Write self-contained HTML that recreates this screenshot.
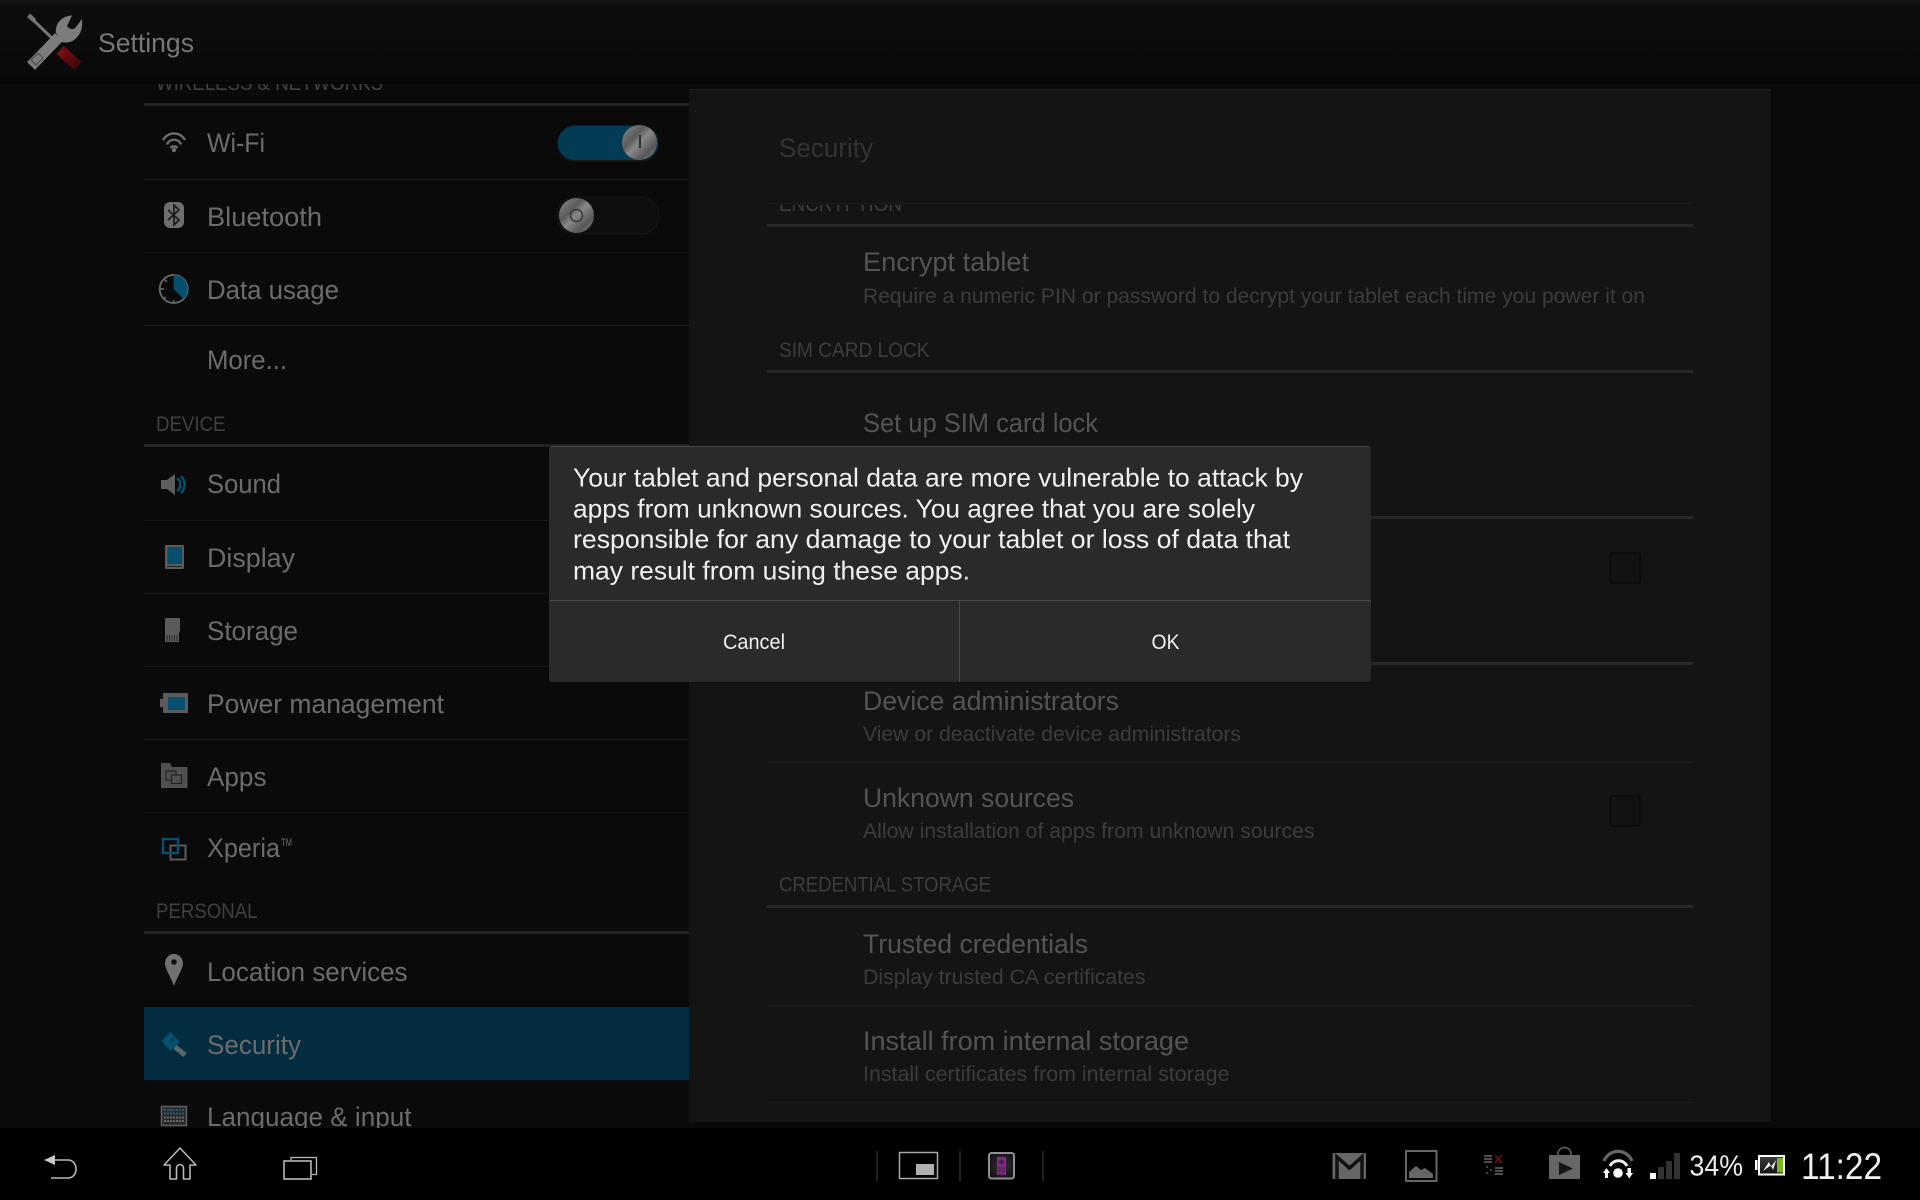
<!DOCTYPE html>
<html>
<head>
<meta charset="utf-8">
<style>
html,body{margin:0;padding:0;background:#000;width:1920px;height:1200px;overflow:hidden}
svg{display:block;position:absolute;left:0;top:0}
text{font-family:"Liberation Sans",sans-serif}
.i{font-size:27px;fill:#6c6c6c}
.h{font-size:21px;fill:#404040}
.t{font-size:27px;fill:#545454}
.s{font-size:21px;fill:#3c3c3c}
.sh{font-size:21px;fill:#3d3d3d}
.d{font-size:26px;fill:#f0f0f0}
.b{font-size:21px;fill:#f0f0f0}
</style>
</head>
<body>
<svg width="1920" height="1200" viewBox="0 0 1920 1200" xmlns="http://www.w3.org/2000/svg">
<defs>
<pattern id="tex" width="4" height="4" patternUnits="userSpaceOnUse">
<rect width="4" height="4" fill="#090909"/>
<path d="M0 0h1v1H0zM2 2h1v1H2z" fill="#0f0f0f"/>
</pattern>
<linearGradient id="bar" x1="0" y1="0" x2="0" y2="1">
<stop offset="0" stop-color="#161616"/><stop offset=".08" stop-color="#0d0d0d"/><stop offset="1" stop-color="#090909"/>
</linearGradient>
<linearGradient id="knob" x1="0" y1="0" x2="1" y2="1">
<stop offset="0" stop-color="#8a8a8a"/><stop offset=".35" stop-color="#5c5c5c"/><stop offset=".5" stop-color="#888"/><stop offset=".75" stop-color="#585858"/><stop offset="1" stop-color="#7a7a7a"/>
</linearGradient>
<linearGradient id="red" x1="0" y1="0" x2="1" y2="1">
<stop offset="0" stop-color="#7a0f14"/><stop offset="1" stop-color="#3e080a"/>
</linearGradient>
<linearGradient id="batt" x1="0" y1="0" x2="0" y2="1">
<stop offset="0" stop-color="#3c3c3c"/><stop offset="1" stop-color="#111"/>
</linearGradient>
<radialGradient id="rem" cx=".5" cy=".5" r=".6">
<stop offset="0" stop-color="#3a3040"/><stop offset="1" stop-color="#111"/>
</radialGradient>
<clipPath id="lc"><rect x="144" y="83" width="545" height="1045"/></clipPath>
<clipPath id="rc"><rect x="689" y="205" width="1082" height="917"/></clipPath>
</defs>

<!-- background -->
<rect width="1920" height="1200" fill="url(#tex)"/>

<!-- left list -->
<g clip-path="url(#lc)">
<text class="h" x="156" y="90" textLength="227" lengthAdjust="spacingAndGlyphs">WIRELESS &amp; NETWORKS</text>
<rect x="144" y="103" width="545" height="3" fill="#222"/>
<rect x="144" y="179" width="545" height="1" fill="#181818"/>
<rect x="144" y="252" width="545" height="1" fill="#181818"/>
<rect x="144" y="325" width="545" height="1" fill="#181818"/>
<text class="i" x="207" y="152" textLength="58" lengthAdjust="spacingAndGlyphs">Wi-Fi</text>
<text class="i" x="207" y="226" textLength="115" lengthAdjust="spacingAndGlyphs">Bluetooth</text>
<text class="i" x="207" y="299" textLength="132" lengthAdjust="spacingAndGlyphs">Data usage</text>
<text class="i" x="207" y="369" textLength="80" lengthAdjust="spacingAndGlyphs">More...</text>
<text class="h" x="156" y="431" textLength="69.500" lengthAdjust="spacingAndGlyphs">DEVICE</text>
<rect x="144" y="444" width="545" height="3" fill="#222"/>
<text class="i" x="207" y="493" textLength="74" lengthAdjust="spacingAndGlyphs">Sound</text>
<rect x="144" y="520" width="545" height="1" fill="#181818"/>
<text class="i" x="207" y="567" textLength="88" lengthAdjust="spacingAndGlyphs">Display</text>
<rect x="144" y="593" width="545" height="1" fill="#181818"/>
<text class="i" x="207" y="640" textLength="91" lengthAdjust="spacingAndGlyphs">Storage</text>
<rect x="144" y="666" width="545" height="1" fill="#181818"/>
<text class="i" x="207" y="713" textLength="237" lengthAdjust="spacingAndGlyphs">Power management</text>
<rect x="144" y="739" width="545" height="1" fill="#181818"/>
<text class="i" x="207" y="786" textLength="59.500" lengthAdjust="spacingAndGlyphs">Apps</text>
<rect x="144" y="812" width="545" height="1" fill="#181818"/>
<text class="i" x="207" y="857" textLength="73" lengthAdjust="spacingAndGlyphs">Xperia</text>
<text x="281" y="846" font-size="11" fill="#6c6c6c" textLength="11" lengthAdjust="spacingAndGlyphs">TM</text>
<text class="h" x="156" y="918" textLength="101.500" lengthAdjust="spacingAndGlyphs">PERSONAL</text>
<rect x="144" y="931" width="545" height="3" fill="#222"/>
<text class="i" x="207" y="981" textLength="200.500" lengthAdjust="spacingAndGlyphs">Location services</text>
<rect x="144" y="1007" width="545" height="73" fill="#022d41"/>
<text class="i" x="207" y="1054" textLength="94" lengthAdjust="spacingAndGlyphs">Security</text>
<text class="i" x="207" y="1126" textLength="204.500" lengthAdjust="spacingAndGlyphs">Language &amp; input</text>
</g>

<!-- left icons -->
<!-- wifi -->
<g fill="none" stroke="#6e6e6e" stroke-width="2.300">
<path d="M163 140A12.500 12.500 0 0 1 185 140"/><path d="M167 144.500A7.500 7.500 0 0 1 181 144.500"/><path d="M170.500 148A4.500 4.500 0 0 1 177.500 148"/>
</g>
<circle cx="174" cy="150" r="2.200" fill="#6e6e6e"/>
<!-- bluetooth -->
<rect x="164" y="202" width="20" height="26" rx="6" fill="#6e6e6e"/>
<path d="M168 210l11 10-5 5v-20l5 5-11 10" fill="none" stroke="#1a1a1a" stroke-width="1.700"/>
<!-- data usage -->
<circle cx="173.700" cy="289" r="14" fill="none" stroke="#6a6a6a" stroke-width="1.800"/>
<path d="M173.700 275A14 14 0 0 1 183.600 298.900L173.700 289z" fill="#06506f"/>
<path d="M160 289h4M164 299l2-2M173.700 303v-3M164 279l3 3" stroke="#6a6a6a" stroke-width="1.500"/>
<!-- sound -->
<path d="M161 480h6l8-6v21l-8-6h-6z" fill="#5e5e5e"/>
<path d="M177 478a8 8 0 0 1 0 13" fill="none" stroke="#06506f" stroke-width="2.500"/>
<path d="M181 476a12 12 0 0 1 0 17" fill="none" stroke="#06506f" stroke-width="2.500"/>
<!-- display -->
<rect x="165" y="545" width="19" height="24" rx="1" fill="#5a5a5a"/>
<rect x="167.500" y="547" width="14.500" height="17" fill="#06506f"/>
<path d="M167 566.500h15" stroke="#2a2a2a" stroke-width="1"/>
<!-- storage -->
<path d="M165 618h15v13l-1 2v9h-14z" fill="#5a5a5a"/>
<path d="M167 635v6M169.500 635v6M172 635v6M174.500 635v6M177 635v6" stroke="#2a2a2a" stroke-width="1"/>
<!-- power -->
<rect x="160" y="699" width="3" height="8" fill="#5a5a5a"/>
<rect x="163" y="693" width="25" height="20" fill="#5a5a5a"/>
<rect x="168" y="697" width="17" height="13" fill="#06506f"/>
<!-- apps -->
<path d="M161 763h9l2 4h15.500v21H161z" fill="#505050"/>
<rect x="166" y="771" width="10" height="9" fill="none" stroke="#222" stroke-width="1.200"/>
<rect x="171.500" y="775" width="10" height="8.500" fill="#505050" stroke="#222" stroke-width="1.200"/>
<!-- xperia -->
<rect x="170.500" y="845.500" width="15" height="14" fill="none" stroke="#5a5a5a" stroke-width="2"/>
<rect x="163" y="839" width="15" height="14" fill="none" stroke="#06506f" stroke-width="2.400"/>
<!-- location -->
<path d="M174 954c-5 0-9 4-9 9.500 0 5 6 14 9 22.500 3-8.500 9-17.500 9-22.500 0-5.500-4-9.500-9-9.500z" fill="#707070"/>
<circle cx="174" cy="962" r="2.800" fill="#111"/>
<!-- key -->
<path d="M161.500 1041l9-9 9 10-9 9z" fill="#06506f"/>
<path d="M175 1047l10 8" stroke="#5a656a" stroke-width="5"/>
<circle cx="172" cy="1040" r="1.500" fill="#022d41"/>
<!-- keyboard -->
<rect x="161.500" y="1106.500" width="25" height="19" fill="#2a2a2a" stroke="#606060" stroke-width="1.500"/>
<path d="M164 1110h20M164 1113.500h20" stroke="#26617f" stroke-width="1.800" stroke-dasharray="2 1"/>
<path d="M164 1117.500h20M164 1121h20" stroke="#6e6e6e" stroke-width="1.800" stroke-dasharray="2 1"/>

<!-- switches -->
<rect x="557" y="125" width="102" height="37" rx="18" fill="#171717"/>
<rect x="558" y="126" width="100" height="34" rx="17" fill="#033a55"/>
<circle cx="639.500" cy="142.500" r="17.500" fill="url(#knob)"/>
<rect x="639" y="135" width="2" height="13" fill="#333"/>
<rect x="557" y="197" width="102" height="37" rx="18" fill="#0e0e0e" stroke="#161616"/>
<circle cx="576.500" cy="215.500" r="17.500" fill="url(#knob)"/>
<circle cx="576.500" cy="215.500" r="6" fill="none" stroke="#333" stroke-width="1.400"/>

<!-- right panel -->
<rect x="689" y="89" width="1082" height="1033" fill="#141414"/>
<rect x="689" y="89" width="1082" height="1" fill="#1c1c1c"/>
<text x="779" y="157" font-size="27" fill="#333" textLength="94" lengthAdjust="spacingAndGlyphs">Security</text>
<g clip-path="url(#rc)">
<text class="sh" x="779" y="211" textLength="123" lengthAdjust="spacingAndGlyphs">ENCRYPTION</text>
</g>
<rect x="767" y="203" width="926" height="1" fill="#1c1c1c"/>
<rect x="767" y="224" width="926" height="3" fill="#282828"/>
<text class="t" x="863" y="271" textLength="166" lengthAdjust="spacingAndGlyphs">Encrypt tablet</text>
<text class="s" x="863" y="303" textLength="782" lengthAdjust="spacingAndGlyphs">Require a numeric PIN or password to decrypt your tablet each time you power it on</text>
<text class="sh" x="779" y="357" textLength="150.500" lengthAdjust="spacingAndGlyphs">SIM CARD LOCK</text>
<rect x="767" y="370" width="926" height="3" fill="#282828"/>
<text class="t" x="863" y="432" textLength="235" lengthAdjust="spacingAndGlyphs">Set up SIM card lock</text>
<rect x="767" y="516" width="926" height="3" fill="#282828"/>
<rect x="1610" y="553" width="30" height="30" rx="2" fill="#121212" stroke="#0a0a0a" stroke-width="1.500"/>
<rect x="767" y="662" width="926" height="3" fill="#282828"/>
<text class="t" x="863" y="710" textLength="256" lengthAdjust="spacingAndGlyphs">Device administrators</text>
<text class="s" x="863" y="741" textLength="378" lengthAdjust="spacingAndGlyphs">View or deactivate device administrators</text>
<rect x="767" y="762" width="926" height="1" fill="#1c1c1c"/>
<text class="t" x="863" y="807" textLength="211" lengthAdjust="spacingAndGlyphs">Unknown sources</text>
<text class="s" x="863" y="838" textLength="451.500" lengthAdjust="spacingAndGlyphs">Allow installation of apps from unknown sources</text>
<rect x="1610" y="796" width="30" height="30" rx="2" fill="#121212" stroke="#0a0a0a" stroke-width="1.500"/>
<text class="sh" x="779" y="891.500" textLength="212" lengthAdjust="spacingAndGlyphs">CREDENTIAL STORAGE</text>
<rect x="767" y="905" width="926" height="3" fill="#282828"/>
<text class="t" x="863" y="953" textLength="225" lengthAdjust="spacingAndGlyphs">Trusted credentials</text>
<text class="s" x="863" y="984" textLength="282.500" lengthAdjust="spacingAndGlyphs">Display trusted CA certificates</text>
<rect x="767" y="1005" width="926" height="1" fill="#1c1c1c"/>
<text class="t" x="863" y="1050" textLength="326" lengthAdjust="spacingAndGlyphs">Install from internal storage</text>
<text class="s" x="863" y="1081" textLength="366.500" lengthAdjust="spacingAndGlyphs">Install certificates from internal storage</text>
<rect x="767" y="1102" width="926" height="1" fill="#1c1c1c"/>

<!-- action bar -->
<rect x="0" y="0" width="1920" height="83" fill="url(#bar)"/>
<rect x="0" y="82" width="1920" height="2" fill="#040404"/>
<!-- settings icon -->
<path d="M30 17l24 23" stroke="#747474" stroke-width="3"/>
<path d="M27 17l3-3.500 6 5.500-3 3.500z" fill="#747474"/>
<path d="M60 50l18 16" stroke="url(#red)" stroke-width="11"/>
<path d="M31 66l28-29" stroke="#7c7c7c" stroke-width="11"/>
<path d="M72 15.500C62 16 55 23 56 33L62 42C73 45 84 35 82 19L76 27C74 30 70 30 67 26z" fill="#7c7c7c"/>
<path d="M31 60l5 5 7-7-5-5z" fill="none" stroke="#4a4a4a" stroke-width="1"/>
<text x="98" y="52" font-size="27" fill="#787878" textLength="96" lengthAdjust="spacingAndGlyphs">Settings</text>

<!-- dialog -->
<rect x="549" y="446" width="822" height="236" rx="3" fill="#2a2a2a"/>
<rect x="551" y="446" width="818" height="1" fill="#444"/>
<text class="d" x="573" y="486.500" textLength="730" lengthAdjust="spacingAndGlyphs">Your tablet and personal data are more vulnerable to attack by</text>
<text class="d" x="573" y="517.500" textLength="682" lengthAdjust="spacingAndGlyphs">apps from unknown sources. You agree that you are solely</text>
<text class="d" x="573" y="548" textLength="717" lengthAdjust="spacingAndGlyphs">responsible for any damage to your tablet or loss of data that</text>
<text class="d" x="573" y="579.500" textLength="397" lengthAdjust="spacingAndGlyphs">may result from using these apps.</text>
<rect x="549" y="600" width="822" height="1" fill="#484848"/>
<rect x="959" y="601" width="1" height="81" fill="#484848"/>
<text class="b" x="723" y="649" textLength="62" lengthAdjust="spacingAndGlyphs">Cancel</text>
<text class="b" x="1151.500" y="649" textLength="28" lengthAdjust="spacingAndGlyphs">OK</text>

<!-- nav bar -->
<rect x="0" y="1128" width="1920" height="72" fill="#000"/>
<!-- back -->
<path d="M44 1160l11-5v10z" fill="#c8c8c8"/>
<path d="M54 1160h14c5 0 8 4 8 9s-3 9-8 9H51" fill="none" stroke="#b8b8b8" stroke-width="1.600"/>
<!-- home -->
<path d="M180 1148l16 17h-6v14h-6.500v-11a3.500 3.500 0 0 0-7 0v11H170v-14h-6z" fill="none" stroke="#b8b8b8" stroke-width="1.600" stroke-linejoin="round"/>
<!-- recents -->
<rect x="284" y="1161" width="27" height="18" fill="none" stroke="#b8b8b8" stroke-width="1.600"/>
<path d="M291 1160v-2.500h25.500v17H312" fill="none" stroke="#b8b8b8" stroke-width="1.300"/>
<!-- center -->
<rect x="876" y="1151" width="2" height="30" fill="#222"/>
<rect x="959" y="1151" width="2" height="30" fill="#222"/>
<rect x="1042" y="1151" width="2" height="30" fill="#222"/>
<rect x="899.500" y="1152.500" width="38" height="26" fill="none" stroke="#a8a8a8" stroke-width="1.500"/>
<rect x="916" y="1164" width="18" height="11" fill="#b0b0b0"/>
<rect x="989" y="1153" width="25" height="25.500" rx="2.500" fill="url(#rem)" stroke="#8f8f8f" stroke-width="2"/>
<rect x="997" y="1157" width="9" height="18" fill="#86268a"/>
<circle cx="1001.500" cy="1162" r="2.500" fill="#3a2a3e"/>
<path d="M997 1168h9M997 1171h9M1000 1167v8M1003 1167v8" stroke="#3a2a3e" stroke-width=".7"/>

<!-- status icons -->
<!-- gmail -->
<rect x="1332.500" y="1153" width="33.500" height="26" rx="1" fill="#666"/>
<path d="M1337 1179v-22l12.500 11 12.500-11v22" fill="none" stroke="#111" stroke-width="3.500"/>
<!-- photo -->
<rect x="1406" y="1151" width="30.500" height="30" fill="none" stroke="#666" stroke-width="2"/>
<path d="M1409 1178v-6l7-6 5 4 4-2 8 6v4z" fill="#666"/>
<!-- tasks -->
<path d="M1484 1156h8M1484 1159h8M1484 1162h8" stroke="#595959" stroke-width="1.800"/>
<path d="M1495 1155l7 8M1502 1155l-7 8" stroke="#7a1010" stroke-width="1.400"/>
<path d="M1495 1168h8M1495 1171h8M1495 1174h8" stroke="#595959" stroke-width="1.800"/>
<path d="M1486 1167h2M1490 1170h2M1486 1173h2" stroke="#595959" stroke-width="1.400"/>
<!-- play store -->
<path d="M1549 1155h31v23a1 1 0 0 1-1 1h-29a1 1 0 0 1-1-1z" fill="#666"/>
<path d="M1558 1155v-1a6.500 6.500 0 0 1 13 0v1" fill="none" stroke="#666" stroke-width="1.500"/>
<path d="M1559 1162l14 6.500-14 6.500z" fill="#141414"/>
<!-- wifi -->
<path d="M1604 1161A15 15 0 0 1 1632 1161" fill="none" stroke="#666" stroke-width="3.200"/>
<path d="M1610 1166A9.500 9.500 0 0 1 1627 1166" fill="none" stroke="#f0f0f0" stroke-width="3"/>
<circle cx="1618" cy="1173" r="4.800" fill="#fff"/>
<path d="M1603 1173l3.500-5 3.500 5h-2v5h-3v-5z" fill="#fff"/>
<path d="M1625.500 1173l3.750 5.500 3.750-5.500h-2v-5h-3.500v5z" fill="#fff"/>
<!-- signal -->
<rect x="1650" y="1173" width="6" height="6" fill="#fff"/>
<rect x="1658" y="1167" width="6" height="12" fill="#333"/>
<rect x="1666" y="1161" width="6" height="18" fill="#333"/>
<rect x="1674" y="1153" width="6" height="26" fill="#333"/>
<text x="1689.500" y="1175.500" font-size="29" fill="#ececec" textLength="53.500" lengthAdjust="spacingAndGlyphs">34%</text>
<!-- battery -->
<rect x="1755" y="1160" width="2.500" height="10" fill="#fff"/>
<rect x="1759" y="1156" width="25" height="18.500" fill="url(#batt)" stroke="#fff" stroke-width="2"/>
<rect x="1777" y="1158" width="6" height="14.500" fill="#7ab51d"/>
<path d="M1763 1171L1769 1162 1771 1167 1776 1160 1773 1170 1771 1165z" fill="#fff"/>
<text x="1801" y="1179" font-size="37" fill="#f0f0f0" textLength="81" lengthAdjust="spacingAndGlyphs">11:22</text>
</svg>
</body>
</html>
